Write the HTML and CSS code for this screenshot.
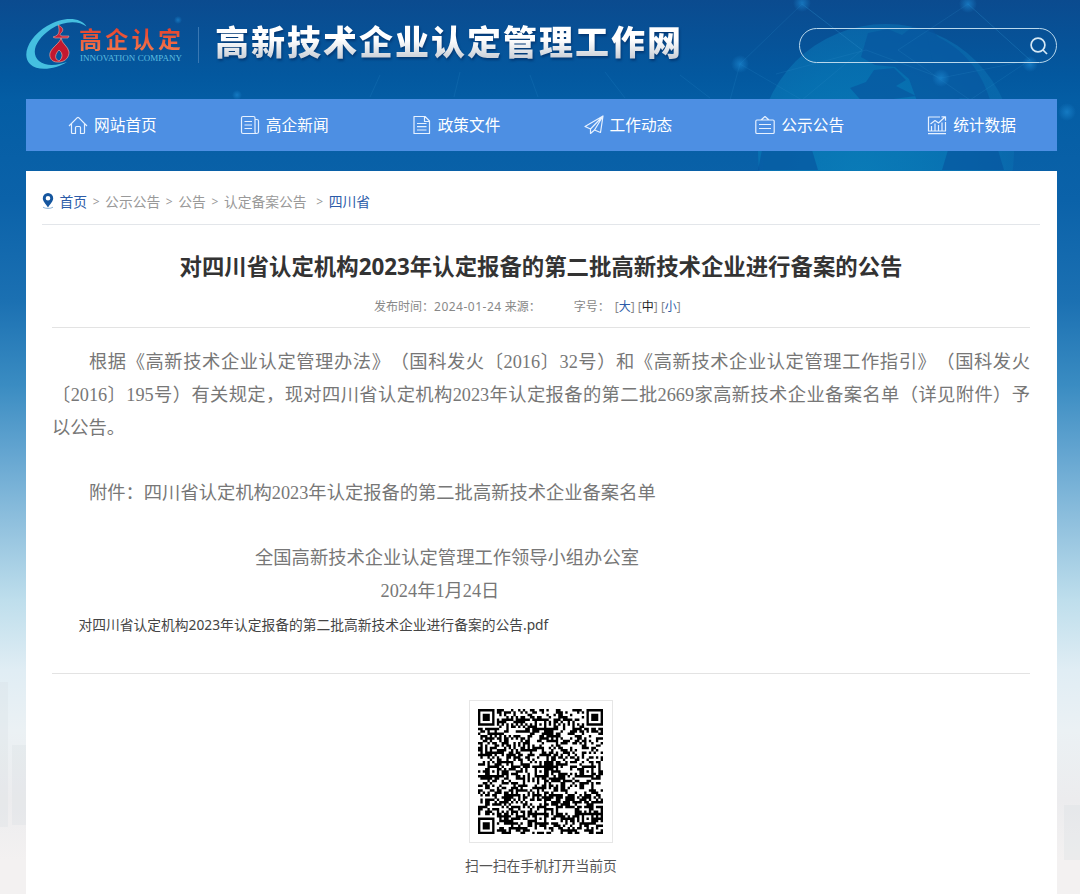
FILE: index.html
```html
<!DOCTYPE html>
<html lang="zh-CN">
<head>
<meta charset="UTF-8">
<meta name="viewport" content="width=device-width, initial-scale=1.0">
<title>高新技术企业认定管理工作网</title>
<link rel="stylesheet" href="styles.css">
</head>
<body>
<svg class="page-bg" viewBox="0 0 1080 894" aria-hidden="true">
  <defs>
    <radialGradient id="globe" cx="0.4" cy="0.6" r="0.6">
      <stop offset="0" stop-color="#0a86be"/>
      <stop offset="0.7" stop-color="#0878b6"/>
      <stop offset="1" stop-color="#0a6cae"/>
    </radialGradient>
    <radialGradient id="dot">
      <stop offset="0" stop-color="#1b86cf" stop-opacity="0.7"/>
      <stop offset="1" stop-color="#1b86cf" stop-opacity="0"/>
    </radialGradient>
  </defs>
  <circle cx="886" cy="152" r="128" fill="url(#globe)" opacity="0.7"/>
  <g fill="#07559f" opacity="0.65">
    <path d="M868 33l20-4 14 6 10-8 20 2 9 12-8 14 14 14 6 24 12 10-14 10-18-14-16 2-8-22-14-12-20-2-14-8z"/>
    <path d="M850 88l16-6 8-12 20-2 12 12-10 6 20 10-30 4-20 6z"/>
    <path d="M926 32c34 12 54 36 64 68l-34-2-22-30z"/>
    <path d="M948 150h50l6 20h-62z"/>
    <path d="M762 150h50l6 20h-60z"/>
  </g>
  <g stroke="#2b8bc9" stroke-width="0.8" fill="none" opacity="0.25">
    <path d="M802 4l-62 60 62 36 60-50zM968 4l-70 46 72 50 60-40zM740 64l-10 36M802 4l60 46M968 4l62 56M776 74l90-24 75 28 90-18"/>
    <path d="M380 75l-10 22M460 72l-6 25M530 75l8 22M605 72l20 26M680 75l30 23"/>
  </g>
  <g fill="url(#dot)">
    <circle cx="802" cy="3" r="9"/>
    <circle cx="968" cy="4" r="9"/>
    <circle cx="740" cy="64" r="9"/>
    <circle cx="1030" cy="64" r="8"/>
    <circle cx="941" cy="78" r="9"/>
    <circle cx="178" cy="20" r="4"/>
    <circle cx="237" cy="95" r="5"/>
    <circle cx="1067" cy="112" r="9"/>
  </g>
  <g fill="#d5dde1" opacity="0.25">
    <path d="M0 682h8v145H0zM12 745h14v80H12zM1064 805h16v55h-16z"/>
  </g>
</svg>

<div class="wrap">
  <header class="header">
    <svg class="logo" viewBox="0 0 64 54" fill="none">
      <path d="M61.500 9.500C56 0 38-1 22 9 4 20-4 38 5 47c8 8 26 5 37-2-8 3-21 5-28-1C5 36 11 22 26 12 38 4 53 3 61.500 9.500z" fill="#45bfe0"/>
      <path d="M33 8c4 2 6 4 4 7-2 2-3 3 0 4h7l-1 2H30l-2-1c4-1 6-3 6-6 0-2 0-4-1-6z" fill="#c52339" stroke="#eba59a" stroke-width="0.6"/>
      <path d="M36 21c-1 5-9 9-11 15-1 5 2 9 7 9h3c6-1 9-5 9-10-1-6-7-8-8-14zm-2 12c4 3 4 8 0 11-5-2-4-7 0-11z" fill="#c3182f" fill-rule="evenodd" stroke="#eba59a" stroke-width="0.7"/>
    </svg>
    <div class="brand">
      <div class="brand-cn">高企认定</div>
      <div class="brand-en">INNOVATION COMPANY</div>
    </div>
    <div class="site-name">高新技术企业认定管理工作网</div>
    <div class="search">
      <svg width="20" height="20" viewBox="0 0 20 20" fill="none" stroke="#d5e8f5" stroke-width="1.7">
        <circle cx="9" cy="9" r="6.900"/>
        <path d="M14 14l4 4"/>
      </svg>
    </div>
  </header>

  <nav class="nav">
    <a href="#">
      <svg viewBox="0 0 20 20"><path d="M1 11l8.300-8.300q.7-.6 1.400 0L19 11M3.500 9v8.500q0 1 1 1H7.500v-6q0-1 1-1h3q1 0 1 1v6h3q1 0 1-1V9"/></svg>
      网站首页
    </a>
    <a href="#">
      <svg viewBox="0 0 20 20"><path d="M3 1.500h10.500q1.500 0 1.500 1.500v14q0 1.500 1.500 1.500H3q-1.500 0-1.500-1.500V3q0-1.500 1.500-1.500zM15 4.500h2q1.500 0 1.500 1.500v11q0 1.500-2 1.500M4.500 6.500h7.500M4.500 10h7.500M4.500 13.500h7.500"/></svg>
      高企新闻
    </a>
    <a href="#">
      <svg viewBox="0 0 20 20"><path d="M2 1.500h11L17.500 6v12.500H2zM12.500 1.500V6.500h5M5 8.500h9.500M5 11.700h9.500M5 15h9.500"/></svg>
      政策文件
    </a>
    <a href="#">
      <svg viewBox="0 0 20 20"><path d="M19 1L1 11.500l5.500 2.500L19 1l-2.500 16.500-6-2.500L19 1M6.500 14v4.500l4-3.500"/></svg>
      工作动态
    </a>
    <a href="#">
      <svg viewBox="0 0 20 20"><path d="M2 5h16q1.200 0 1.200 1.200v11q0 1.300-1.200 1.300H2q-1.200 0-1.200-1.300v-11Q.8 5 2 5zM6 5l4-3.500L14 5M4 9.500h12M4 13.500h12"/></svg>
      公示公告
    </a>
    <a href="#">
      <svg viewBox="0 0 20 20"><path d="M13 2H1.500v14h17V7M1 18.700h18M4.500 16v-5M8 16V8.500M11.500 16v-6M15 16V7.500M3.500 9l4.500-3.500 3.500 2.500L18 2M14.500 1.800h4v4"/></svg>
      统计数据
    </a>
  </nav>

  <main class="panel">
    <div class="crumbs">
      <svg width="12" height="16" viewBox="0 0 12 16"><path d="M6 0a5.200 5.200 0 0 0-5.200 5.200C.8 8.500 4 11 6 14.500 8 11 11.200 8.500 11.200 5.200A5.200 5.200 0 0 0 6 0zm0 3a2.300 2.300 0 1 1 0 4.600A2.300 2.300 0 0 1 6 3z" fill="#15569f"/><path d="M1 14.200c2 1.600 8 1.600 10 0" stroke="#8eb4d8" fill="none"/></svg>
      <a class="blue" href="#">首页</a><i>&gt;</i><a href="#">公示公告</a><i>&gt;</i><a href="#">公告</a><i>&gt;</i><a href="#">认定备案公告</a><i class="last">&gt;</i><a class="blue" href="#">四川省</a>
    </div>

    <article class="article">
      <h1>对四川省认定机构2023年认定报备的第二批高新技术企业进行备案的公告</h1>
      <div class="meta">
        <span>发布时间：<span class="date">2024-01-24</span> 来源：</span>
        <span class="size">字号：<span class="opts">[<a href="#">大</a>] [<b>中</b>] [<a href="#">小</a>]</span></span>
      </div>

      <div class="content">
        <p class="full indent">根据《高新技术企业认定管理办法》（国科发火〔2016〕32号）和《高新技术企业认定管理工作指引》（国科发火</p>
        <p class="full">〔2016〕195号）有关规定，现对四川省认定机构2023年认定报备的第二批2669家高新技术企业备案名单（详见附件）予</p>
        <p>以公告。</p>
        <p class="indent gap">附件：四川省认定机构2023年认定报备的第二批高新技术企业备案名单</p>
        <div class="sign">
          <p>全国高新技术企业认定管理工作领导小组办公室</p>
          <p>2024年1月24日</p>
        </div>
      </div>
      <a class="attach" href="#">对四川省认定机构2023年认定报备的第二批高新技术企业进行备案的公告.pdf</a>
    </article>

    <div class="qr">
      <div class="qr-box"><svg id="qr" viewBox="0 0 53 53"><path fill="#000"/></svg></div>
      <p>扫一扫在手机打开当前页</p>
    </div>
  </main>
</div>
<script src="qr.js"></script>
</body>
</html>
```
FILE: styles.css
```css
* {
  box-sizing: border-box;
}
body {
  margin: 0;
  height: 894px;
  overflow: hidden;
  position: relative;
  font-family: "Noto Sans", "Noto Sans CJK SC", sans-serif;
  background: linear-gradient(#0b4b8f 0, #03589f 75px, #045da4 100px, #0b62a9 200px, #1b70b2 300px, #3a8cc2 385px, #62a4d0 450px, #94c3df 530px, #bedeec 600px, #e0edf4 670px, #ebf1f4 730px, #ececee 800px, #f3f1f1 860px, #f3f1f1 894px);
}
a {
  color: inherit;
  text-decoration: none;
}
p, h1 {
  margin: 0;
}
.page-bg {
  position: absolute;
  left: 0;
  top: 0;
  width: 1080px;
  height: 894px;
}
.wrap {
  position: relative;
  width: 1031px;
  margin-left: 26px;
}

/* header */
.header {
  display: flex;
  align-items: flex-start;
  height: 99px;
}
.logo {
  width: 64px;
  height: 54px;
  margin: 17px -10px 0 -1px;
}
.brand {
  width: 120px;
  height: 36px;
  margin-top: 27px;
  border-right: 1px solid #3978b3;
}
.brand-cn {
  font-size: 23px;
  line-height: 25px;
  font-weight: 700;
  letter-spacing: 3.3px;
  color: transparent;
  background: linear-gradient(#e5402c, #f37a4e);
  -webkit-background-clip: text;
  background-clip: text;
}
.brand-en {
  margin: 2px 0 0 1px;
  font: 9px/9px "Liberation Serif", serif;
  letter-spacing: 0.05px;
  white-space: nowrap;
  color: #5dbfe0;
}
.site-name {
  margin: 18px 0 0 16px;
  font-size: 34px;
  line-height: 48px;
  font-weight: 900;
  letter-spacing: 2px;
  white-space: nowrap;
  color: transparent;
  background: linear-gradient(#fff 45%, #c9ced6 85%);
  -webkit-background-clip: text;
  background-clip: text;
  filter: drop-shadow(1px 2px 1px rgba(0, 30, 80, 0.5));
}
.search {
  display: flex;
  align-items: center;
  justify-content: flex-end;
  width: 258px;
  height: 35px;
  margin: 28px 0 0 auto;
  padding-right: 7px;
  border: 1px solid #b9d8ec;
  border-radius: 18px;
}

/* nav */
.nav {
  display: flex;
  height: 51.5px;
  background: #4d8fe3;
}
.nav a {
  flex: 1;
  display: flex;
  align-items: center;
  justify-content: center;
  gap: 6px;
  padding-left: 1px;
  font-size: 15.7px;
  color: #fff;
}
.nav svg {
  width: 20px;
  height: 20px;
  fill: none;
  stroke: #e6f1ff;
  stroke-width: 1.2;
  stroke-linejoin: round;
}

/* content panel */
.panel {
  height: 723px;
  margin-top: 20.5px;
  padding: 0 17px 0 16px;
  background: #fff;
}
.crumbs {
  display: flex;
  align-items: center;
  height: 54px;
  padding-top: 7px;
  border-bottom: 1px solid #e3e6ea;
  font-size: 13.8px;
  color: #999;
}
.crumbs svg {
  margin-right: 5.5px;
}
.crumbs i {
  width: 18px;
  padding-top: 1px;
  text-align: center;
  font-style: normal;
  font-size: 12px;
}
.crumbs .last {
  width: 22px;
  padding-left: 4px;
}
.crumbs .blue {
  color: #2c5ca8;
}
.article {
  margin: 0 10px;
  height: 449px;
  border-bottom: 1px solid #e3e3e3;
}
h1 {
  padding-top: 25px;
  font-size: 22.4px;
  line-height: 34px;
  font-weight: 700;
  text-align: center;
  white-space: nowrap;
  color: #333;
}
.meta {
  display: flex;
  height: 44px;
  padding-left: 322px;
  border-bottom: 1px solid #e3e3e3;
  font-size: 12px;
  line-height: 46px;
  color: #888;
}
.meta .date {
  letter-spacing: 0.5px;
}
.meta .size {
  margin-left: 33px;
}
.meta .opts {
  margin-left: 5px;
}
.meta a {
  color: #2c5ca8;
}
.meta b {
  font-weight: 400;
  color: #222;
}
.content {
  padding-top: 18px;
  font-family: "Liberation Serif", "Noto Sans CJK SC", serif;
  font-size: 18.3px;
  line-height: 33px;
  color: #777;
  text-spacing-trim: space-all;
}
.content p {
  white-space: nowrap;
}
.content .full {
  text-align-last: justify;
}
.content .indent {
  padding-left: 37px;
}
.content .gap {
  margin: 32px 0;
}
.sign {
  width: 384px;
  margin-left: 203px;
  text-align: center;
}
.sign p + p {
  padding-right: 14px;
}
.attach {
  display: block;
  margin-left: 26.5px;
  font-size: 13.78px;
  line-height: 34px;
  color: #444;
}
.qr {
  display: flex;
  flex-direction: column;
  align-items: center;
  padding-top: 26px;
}
.qr-box {
  width: 144px;
  height: 143px;
  padding: 8px;
  border: 1px solid #e6e6e6;
}
.qr-box svg {
  display: block;
  width: 125px;
  height: 125px;
}
.qr p {
  font-size: 13.8px;
  line-height: 46px;
  color: #555;
}
```
FILE: qr.js
```js
const size = 53;
let seed = 20240124;

function nextBit() {
  seed = (seed * 1103515245 + 12345) % 2147483648;
  return (seed >> 16) % 100 < 51;
}

// ring pattern: dark, light, dark counted from the centre
function ring(x, y, cx, cy, r) {
  const d = Math.max(Math.abs(x - cx), Math.abs(y - cy));
  if (d > r) return null;
  if (r === 4) return d < 2 || d === 3;
  return d !== 1;
}

function isDark(x, y) {
  const bit = nextBit();
  for (const [cx, cy] of [[3, 3], [size - 4, 3], [3, size - 4]]) {
    const v = ring(x, y, cx, cy, 4);
    if (v !== null) return v;
  }
  for (const [cx, cy] of [[26, 6], [6, 26], [26, 26], [46, 26], [26, 46], [46, 46]]) {
    const v = ring(x, y, cx, cy, 2);
    if (v !== null) return v;
  }
  if (x === 6) return y % 2 === 0;
  if (y === 6) return x % 2 === 0;
  return bit;
}

// neighbouring dark modules in a row are drawn as one bar
let d = "";
for (let y = 0; y < size; y++) {
  let start = -1;
  for (let x = 0; x <= size; x++) {
    const dark = x < size && isDark(x, y);
    if (dark && start < 0) start = x;
    if (!dark && start >= 0) {
      d += `M${start} ${y}H${x}v1.05H${start}z`;
      start = -1;
    }
  }
}
document.querySelector("#qr path").setAttribute("d", d);
```
